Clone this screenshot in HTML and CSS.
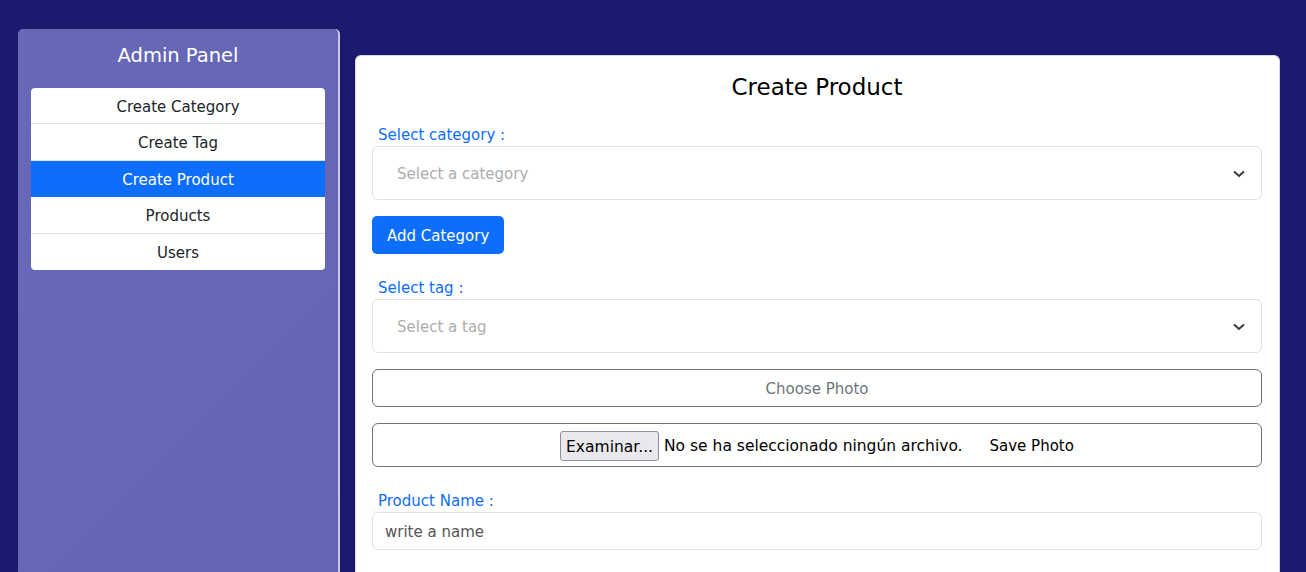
FILE: index.html
```html
<!DOCTYPE html>
<html lang="en">
<head>
<meta charset="utf-8">
<title>Admin - Create Product</title>
<link rel="stylesheet" href="styles.css">
</head>
<body>
<div class="layout">
  <aside class="sidebar">
    <h2 class="sidebar-title">Admin Panel</h2>
    <ul class="menu">
      <li class="menu-item">Create Category</li>
      <li class="menu-item">Create Tag</li>
      <li class="menu-item active">Create Product</li>
      <li class="menu-item">Products</li>
      <li class="menu-item">Users</li>
    </ul>
  </aside>
  <main class="card">
    <h1 class="card-title">Create Product</h1>
    <label class="field-label">Select category :</label>
    <div class="select">
      <span class="placeholder">Select a category</span>
      <svg class="chevron" width="12" height="8" viewBox="0 0 12 8"><path d="M1 1.5 L6 6 L11 1.5" fill="none" stroke="#343a40" stroke-width="2"/></svg>
    </div>
    <div class="btn-row"><button class="btn-primary">Add Category</button></div>
    <label class="field-label">Select tag :</label>
    <div class="select">
      <span class="placeholder">Select a tag</span>
      <svg class="chevron" width="12" height="8" viewBox="0 0 12 8"><path d="M1 1.5 L6 6 L11 1.5" fill="none" stroke="#343a40" stroke-width="2"/></svg>
    </div>
    <div class="outline-box choose">Choose Photo</div>
    <div class="outline-box file-box">
      <button class="file-btn">Examinar...</button>
      <span class="file-text">No se ha seleccionado ningún archivo.</span>
      <span class="save-text">Save Photo</span>
    </div>
    <label class="field-label">Product Name :</label>
    <div class="text-input">write a name</div>
  </main>
</div>
</body>
</html>
```

FILE: styles.css
```css
* { box-sizing: border-box; }
html, body { margin: 0; padding: 0; }
body {
  background: #1c1a6e;
  font-family: "DejaVu Sans", "Open Sans", sans-serif;
  font-size: 15px;
  color: #212529;
  height: 572px;
  overflow: hidden;
}
.layout {
  display: flex;
  align-items: flex-start;
  padding: 29px 26px 0 18px;
}
.sidebar {
  width: 322px;
  height: 543px;
  flex-shrink: 0;
  background: linear-gradient(135deg, #6868b8 0%, #6565b5 100%);
  border-radius: 5px 5px 0 0;
  border-right: 2px solid #c9c9e2;
  padding: 11px 13px 0 13px;
}
.sidebar-title {
  margin: 0 0 16px;
  font-weight: 400;
  font-size: 19.5px;
  line-height: 32px;
  color: #fff;
  text-align: center;
}
.menu {
  list-style: none;
  margin: 0;
  padding: 0;
  background: #fff;
  border-radius: 4px;
  overflow: hidden;
}
.menu-item {
  height: 36.4px;
  padding-top: 3px;
  line-height: 33px;
  text-align: center;
  color: #212529;
  border-bottom: 1px solid #dee2e6;
}
.menu-item:last-child { border-bottom: none; }
.menu-item.active {
  background: #0d6efd;
  color: #fff;
  border-bottom-color: #0d6efd;
}
.card {
  flex: 1;
  margin-top: 26px;
  margin-left: 15px;
  height: 517px;
  background: #fff;
  border: 1px solid #d8d8e6;
  border-bottom: none;
  border-radius: 6px 6px 0 0;
  padding: 0 17px 0 16px;
  display: flex;
  flex-direction: column;
}
.card-title {
  margin: 17px 0 20px;
  font-size: 23px;
  font-weight: 400;
  line-height: 29px;
  text-align: center;
  color: #000;
}
.field-label {
  display: block;
  padding: 2px 0 0 6px;
  color: #0d6efd;
  line-height: 22px;
}
.select {
  height: 54px;
  flex-shrink: 0;
  border: 1px solid #dee2e6;
  border-radius: 6px;
  display: flex;
  align-items: center;
  justify-content: space-between;
  padding: 2px 16px 0 24px;
}
.placeholder { color: #adadad; }
.btn-row { display: flex; margin: 16px 0 21px; }
.btn-primary {
  font-family: inherit;
  font-size: 15px;
  color: #fff;
  background: #0d6efd;
  border: none;
  border-radius: 5px;
  height: 38px;
  padding: 2px 15px 0;
}
.select + .outline-box { margin-top: 16px; }
.outline-box {
  flex-shrink: 0;
  border: 1px solid #6c757d;
  border-radius: 6px;
  display: flex;
  align-items: center;
  justify-content: center;
  padding-top: 2px;
}
.choose {
  height: 38px;
  color: #6c757d;
}
.file-box {
  height: 44px;
  margin-top: 16px;
  margin-bottom: 21px;
  color: #000;
}
.file-btn {
  font-family: inherit;
  font-size: 15.5px;
  color: #000;
  background: #e9e9ed;
  border: 1px solid #8f8f9d;
  border-radius: 3px;
  height: 30px;
  padding: 1px 5px 0;
  margin-right: 5px;
}
.file-text { font-size: 15.5px; }
.save-text { margin-left: 27px; }
.text-input {
  height: 38px;
  flex-shrink: 0;
  border: 1px solid #dee2e6;
  border-radius: 6px;
  padding: 2px 12px 0;
  display: flex;
  align-items: center;
  color: #555;
}
```
